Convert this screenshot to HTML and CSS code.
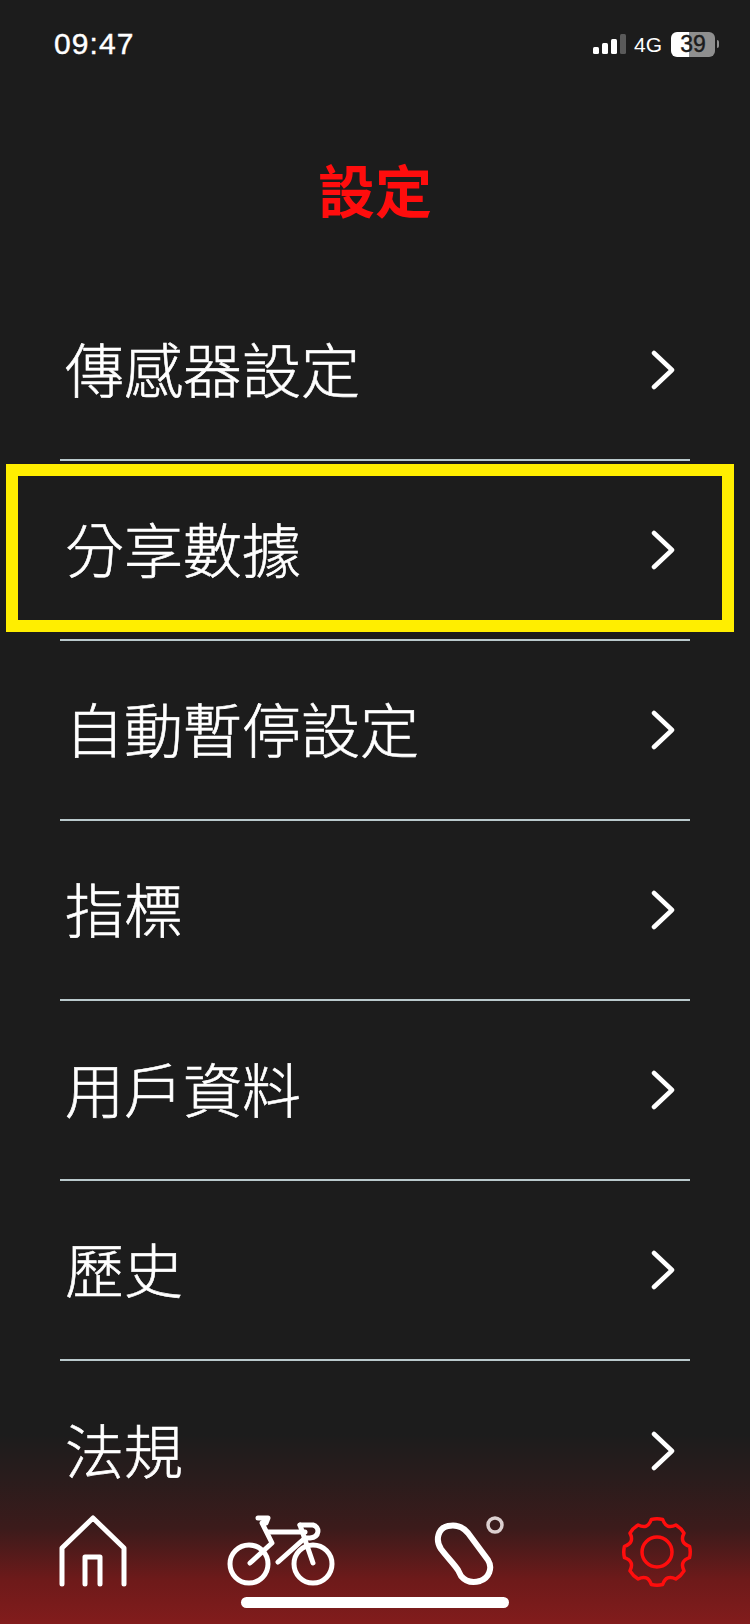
FILE: index.html
```html
<!DOCTYPE html>
<html>
<head>
    <title>設定</title>
    <meta charset="UTF-8">
    <link rel="stylesheet" href="styles.css">
</head>
<body>
    <div class="status-bar">
        <span class="time">09:47</span>
        <div class="status-icons">
            <div class="signal">
                <i class="bar bar1"></i><i class="bar bar2"></i><i class="bar bar3"></i><i class="bar bar4"></i>
            </div>
            <span class="net">4G</span>
            <div class="battery">39</div>
            <i class="battery-nub"></i>
        </div>
    </div>

    <h1 class="title">設定</h1>

    <div class="menu">
        <div class="row">
            <span>傳感器設定</span>
            <svg class="chevron" viewBox="0 0 24 40"><path d="M3 3 L21 20 L3 37"/></svg>
        </div>
        <div class="row">
            <span>分享數據</span>
            <svg class="chevron" viewBox="0 0 24 40"><path d="M3 3 L21 20 L3 37"/></svg>
            <!-- yellow mark sits on top of the row -->
            <div class="highlight"></div>
        </div>
        <div class="row">
            <span>自動暫停設定</span>
            <svg class="chevron" viewBox="0 0 24 40"><path d="M3 3 L21 20 L3 37"/></svg>
        </div>
        <div class="row">
            <span>指標</span>
            <svg class="chevron" viewBox="0 0 24 40"><path d="M3 3 L21 20 L3 37"/></svg>
        </div>
        <div class="row">
            <span>用戶資料</span>
            <svg class="chevron" viewBox="0 0 24 40"><path d="M3 3 L21 20 L3 37"/></svg>
        </div>
        <div class="row">
            <span>歷史</span>
            <svg class="chevron" viewBox="0 0 24 40"><path d="M3 3 L21 20 L3 37"/></svg>
        </div>
        <div class="row">
            <span>法規</span>
            <svg class="chevron" viewBox="0 0 24 40"><path d="M3 3 L21 20 L3 37"/></svg>
        </div>
    </div>

    <div class="tabbar">
        <div class="tab">
            <svg class="tab-icon" viewBox="0 0 80 80">
                <path d="M8 72 V36 L39 6 L70 36 V72"/>
                <path d="M31 72 V45 H46 V72"/>
            </svg>
        </div>
        <div class="tab">
            <svg class="tab-icon bike" viewBox="0 0 120 80">
                <circle cx="27" cy="52" r="19"/>
                <circle cx="91" cy="52" r="19"/>
                <path d="M36 6 H46 L44 11 H40 L50 31 L28 51"/>
                <path d="M46 20 H83"/>
                <path d="M78 13 H91 C98 15 98 25 88 26 H83 L56 50"/>
                <path d="M78 13 L91 51"/>
            </svg>
        </div>
        <div class="tab">
            <svg class="tab-icon pod" viewBox="0 0 80 80">
                <path d="M11 37 C5 28 8 16 18 14 C27 12 33 15 38 21 L58 48 C63 56 59 66 50 69 C43 71 36 70 31 64 L28 58 C24 52 17 45 11 37 Z"/>
                <circle class="pod-dot" cx="65" cy="13" r="7"/>
            </svg>
        </div>
        <div class="tab">
            <svg class="tab-icon gear" viewBox="-40 -40 80 80">
                <path d="M32.5 -5.7 Q34 0 32.5 5.7 Q22.2 9.2 27 18.9 Q24 24 18.9 27 Q9.2 22.2 5.7 32.5 Q0 34 -5.7 32.5 Q-9.2 22.2 -18.9 27 Q-24 24 -27 18.9 Q-22.2 9.2 -32.5 5.7 Q-34 0 -32.5 -5.7 Q-22.2 -9.2 -27 -18.9 Q-24 -24 -18.9 -27 Q-9.2 -22.2 -5.7 -32.5 Q0 -34 5.7 -32.5 Q9.2 -22.2 18.9 -27 Q24 -24 27 -18.9 Q22.2 -9.2 32.5 -5.7Z"/>
                <circle cx="0" cy="0" r="15"/>
            </svg>
        </div>
        <div class="home-indicator"></div>
    </div>
</body>
</html>
```

FILE: styles.css
```css
html, body { margin: 0; padding: 0; }
body {
    width: 750px;
    height: 1624px;
    overflow: hidden;
    position: relative;
    background: #1c1c1c;
    color: #fff;
    font-family: "Noto Sans CJK TC", "Noto Sans", sans-serif;
}

.status-bar {
    height: 88px;
    display: flex;
    align-items: center;
    justify-content: space-between;
    padding: 0 31px 0 54px;
    box-sizing: border-box;
}
.time { font-family: "Liberation Sans", sans-serif; font-size: 30px; letter-spacing: 1.1px; -webkit-text-stroke: 0.4px #fff; }
.status-icons { display: flex; align-items: center; }
.signal { display: flex; align-items: flex-end; gap: 3px; height: 20px; margin-right: 8px; }
.bar { display: block; width: 6px; background: #fff; border-radius: 1.5px; }
.bar1 { height: 7px; }
.bar2 { height: 11px; }
.bar3 { height: 15px; }
.bar4 { height: 20px; background: #5a5a5a; }
.net { font-family: "Liberation Sans", sans-serif; font-size: 21px; margin: 2px 9px 0 0; }
.battery {
    width: 44px;
    height: 25px;
    border-radius: 6px;
    background: linear-gradient(to right, #fff 0, #fff 41%, #8f8f8f 41%, #8f8f8f 100%);
    color: #1c1c1c;
    font-family: "Liberation Sans", sans-serif;
    font-size: 23px;
    line-height: 25px;
    text-align: center;
    -webkit-text-stroke: 0.4px #1c1c1c;
}
.battery-nub { display: block; width: 2px; height: 8px; margin-left: 2px; background: #8f8f8f; border-radius: 0 2px 2px 0; }

.title {
    margin: 0;
    height: 193px;
    padding-top: 60px;
    box-sizing: border-box;
    text-align: center;
    font-size: 57px;
    line-height: 80px;
    font-weight: bold;
    color: #ff0d0d;
}

/* list stays above the tabbar gradient */
.menu { position: relative; z-index: 1; padding: 0 60px; }
.row {
    position: relative;
    height: 180px;
    box-sizing: border-box;
    border-bottom: 2px solid #b9c9cc;
    display: flex;
    align-items: center;
    justify-content: space-between;
    padding: 0 15px 0 5px;
    font-size: 59px;
    font-weight: 300;
}
.row span { margin-bottom: 6px; -webkit-text-stroke: 0.6px #fff; }
.row:last-child { border-bottom: none; }
.chevron { width: 24px; height: 40px; fill: none; stroke: #fff; stroke-width: 4.5; stroke-linecap: round; stroke-linejoin: round; }
.highlight {
    position: absolute;
    left: -54px;
    right: -44px;
    top: 3px;
    height: 168px;
    box-sizing: border-box;
    border: 12px solid #ffee00;
}

.tabbar {
    position: absolute;
    left: 0;
    right: 0;
    bottom: 0;
    height: 190px;
    box-sizing: border-box;
    padding-top: 78px;
    display: grid;
    grid-template-columns: repeat(4, 188px);
    align-items: start;
    background: linear-gradient(to bottom, #1c1c1c 0, #2a1c1c 24%, #3c1b1b 50%, #6e1a1a 77%, #821c1c 100%);
}
.tab { position: relative; z-index: 2; display: flex; justify-content: center; }
.tab-icon { width: 80px; height: 80px; fill: none; stroke: #fff; stroke-width: 5; stroke-linecap: round; stroke-linejoin: round; }
.bike { width: 120px; }
.pod path { stroke-width: 6; }
.pod-dot { stroke: #dcd0d0; stroke-width: 3.5; }
.gear { margin-left: -3px; stroke: #ff0d0d; stroke-width: 3.5; }
.home-indicator {
    position: absolute;
    left: 241px;
    bottom: 16px;
    width: 268px;
    height: 11px;
    border-radius: 6px;
    background: #fff;
}
```
